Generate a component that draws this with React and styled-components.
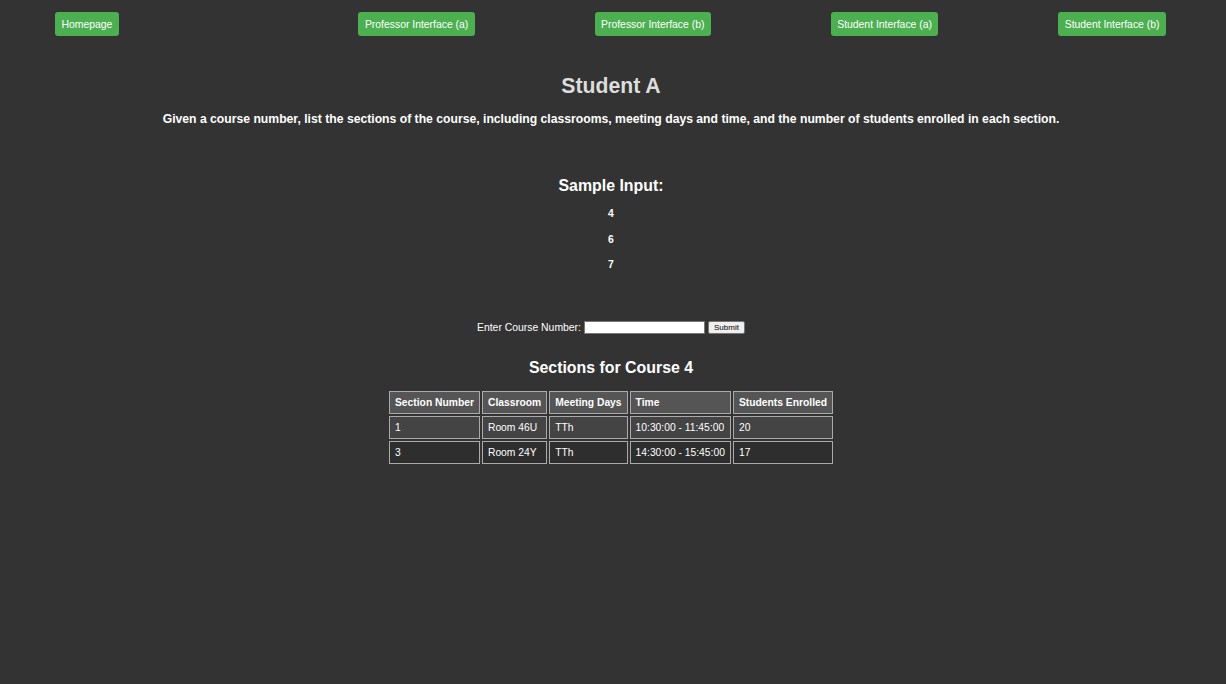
import styled, { createGlobalStyle } from "styled-components";

const GlobalStyle = createGlobalStyle`
    html, body {
        margin: 0;
        padding: 0;
        background-color: #333333;
    }
    body {
        font-family: "Liberation Sans", Arial, sans-serif;
        color: #ffffff;
        min-height: 684px;
    }
`;

const NAV_LINKS = [
    "Homepage",
    null,
    "Professor Interface (a)",
    "Professor Interface (b)",
    "Student Interface (a)",
    "Student Interface (b)",
];

const SAMPLE_INPUT = ["4", "6", "7"];

const HEADERS = ["Section Number", "Classroom", "Meeting Days", "Time", "Students Enrolled"];

const SECTIONS = [
    ["1", "Room 46U", "TTh", "10:30:00 - 11:45:00", "20"],
    ["3", "Room 24Y", "TTh", "14:30:00 - 15:45:00", "17"],
];

export default function App() {
    return (
        <>
            <GlobalStyle />
            <Page>
                <Nav>
                    {NAV_LINKS.map((label, i) =>
                        label ? <NavButton key={i}>{label}</NavButton> : <Spacer key={i} />
                    )}
                </Nav>
                <Content>
                    <Title>Student A</Title>
                    <Description>
                        Given a course number, list the sections of the course, including classrooms, meeting days and time, and the number of students enrolled in each section.
                    </Description>
                    <SubTitle $top={51}>Sample Input:</SubTitle>
                    <SampleList>
                        {SAMPLE_INPUT.map((e) => <SampleItem key={e}>{e}</SampleItem>)}
                    </SampleList>
                    <Form onSubmit={(e) => e.preventDefault()}>
                        <Label htmlFor="course">Enter Course Number:</Label>
                        <CourseInput id="course" type="text" />
                        <SubmitButton type="submit">Submit</SubmitButton>
                    </Form>
                    <SubTitle $top={25}>Sections for Course 4</SubTitle>
                    <Table>
                        <thead>
                            <tr>
                                {HEADERS.map((h) => <HeadCell key={h}>{h}</HeadCell>)}
                            </tr>
                        </thead>
                        <tbody>
                            {SECTIONS.map((row, i) => (
                                <Row key={i} $odd={i % 2 === 0}>
                                    {row.map((c, j) => <Cell key={j}>{c}</Cell>)}
                                </Row>
                            ))}
                        </tbody>
                    </Table>
                </Content>
            </Page>
        </>
    );
}

const Page = styled.div`
    padding: 12px 12px 0 8px;
`;

const Nav = styled.nav`
    display: flex;
    justify-content: space-between;
    align-items: center;
    padding: 0 48px 0 47px;
`;

const Spacer = styled.span`
    width: 0;
`;

const NavButton = styled.button`
    font-family: "Liberation Sans", Arial, sans-serif;
    font-size: 10.4px;
    color: #ffffff;
    background-color: #4caf50;
    border: none;
    border-radius: 3px;
    height: 24px;
    padding: 0 6.5px;
    cursor: pointer;
`;

const Content = styled.main`
    display: flex;
    flex-direction: column;
    align-items: center;
`;

const Title = styled.h1`
    font-size: 21.2px;
    font-weight: bold;
    color: #dddddd;
    margin: 38px 0 0 0;
    line-height: 24px;
`;

const Description = styled.p`
    font-size: 12.2px;
    font-weight: bold;
    color: #ffffff;
    margin: 14px 0 0 0;
    line-height: 14px;
`;

const SubTitle = styled.h3`
    font-size: 15.9px;
    font-weight: bold;
    color: #ffffff;
    margin: ${(p) => p.$top}px 0 0 0;
    line-height: 18px;
`;

const SampleList = styled.div`
    display: flex;
    flex-direction: column;
    align-items: center;
    gap: 12.5px;
    margin-top: 12px;
`;

const SampleItem = styled.p`
    font-size: 10.4px;
    font-weight: bold;
    margin: 0;
    line-height: 13px;
`;

const Form = styled.form`
    display: flex;
    align-items: center;
    margin-top: 50px;
`;

const Label = styled.label`
    font-size: 10.4px;
    color: #ffffff;
    margin-right: 3px;
`;

const CourseInput = styled.input`
    width: 121px;
    height: 13px;
    box-sizing: border-box;
    border: 1px solid #767676;
    background: #ffffff;
    padding: 0 2px;
    font-size: 8px;
`;

const SubmitButton = styled.button`
    font-family: "Liberation Sans", Arial, sans-serif;
    font-size: 8px;
    color: #000000;
    background-color: #efefef;
    border: 1px solid #767676;
    border-radius: 2px;
    height: 13px;
    width: 37px;
    padding: 0;
    margin-left: 3px;
`;

const Table = styled.table`
    border: none;
    border-spacing: 2px;
    margin-top: 12px;
    font-size: 10.3px;
`;

const HeadCell = styled.th`
    background-color: #555555;
    border: 1px solid #aaaaaa;
    padding: 0 5px;
    height: 21px;
    text-align: left;
    font-weight: bold;
    color: #ffffff;
`;

const Row = styled.tr`
    background-color: ${(p) => (p.$odd ? "#444444" : "#2e2e2e")};
`;

const Cell = styled.td`
    border: 1px solid #aaaaaa;
    padding: 0 5px;
    height: 21px;
    text-align: left;
    color: #ffffff;
`;
